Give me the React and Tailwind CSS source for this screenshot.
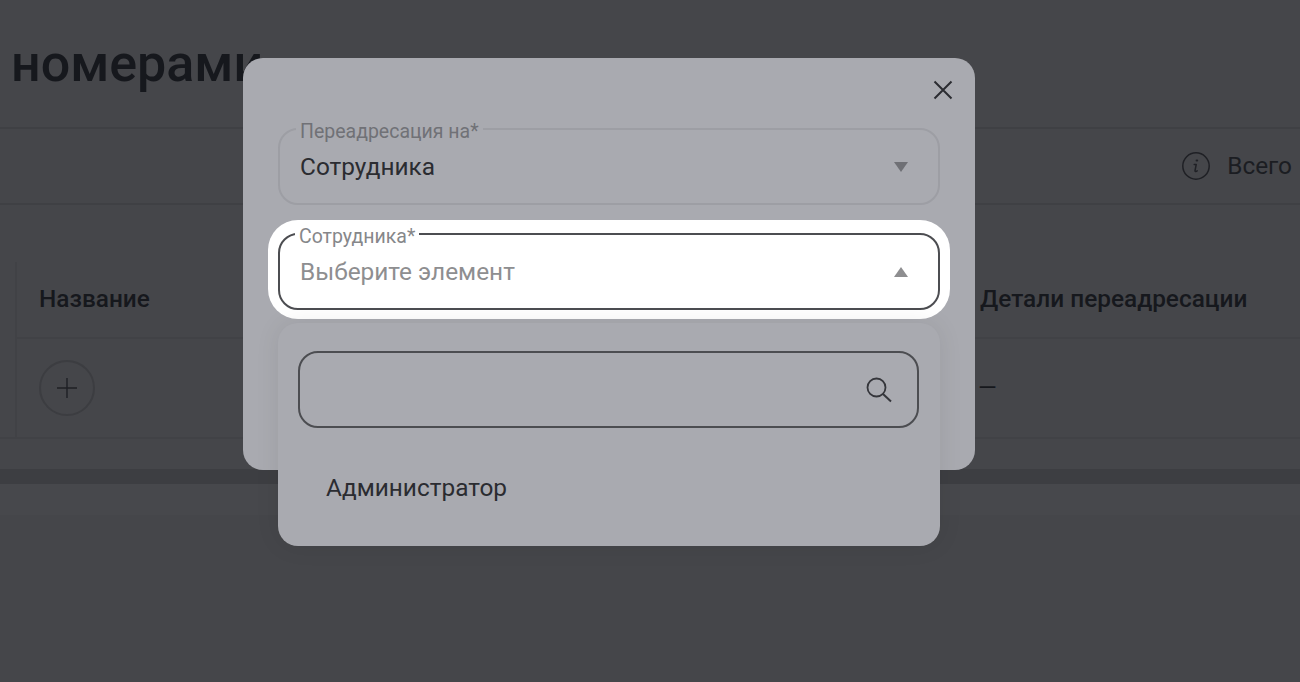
const font = { fontFamily: 'Roboto, "Noto Sans", sans-serif' };

function Caret({ up, className }) {
    return (
        <svg width="14" height="10" viewBox="0 0 14 10" className={className}>
            <path d={up ? 'M7 0L14 10H0Z' : 'M0 0H14L7 10Z'} fill="currentColor" />
        </svg>
    );
}

function Field({ label, value, up, active, bg }) {
    return (
        <div
            className={`relative flex h-[77px] items-center justify-between rounded-[20px] border-2 pl-[20px] pr-[30px] ${
                active ? 'border-[#4c4d51]' : 'border-[#9d9ea4]'
            }`}
        >
            <span
                className={`absolute top-[-7px] px-[4px] text-[19.5px] leading-[18px] ${bg} ${
                    active ? 'left-[15px] text-[#86878a]' : 'left-[16px] text-[#707176]'
                }`}
            >
                {label}
            </span>
            <span
                className={`pt-[1px] text-[24.4px] ${
                    active ? 'text-[#8e8e90]' : 'text-[#2b2c31]'
                }`}
            >
                {value}
            </span>
            <Caret up={up} className={active ? 'text-[#8e8e90]' : 'text-[#6f7075]'} />
        </div>
    );
}

export default function App() {
    return (
        <div
            className="relative h-[682px] w-full overflow-hidden bg-[#45464a]"
            style={font}
        >
            <div className="flex h-[129px] items-center border-b-2 border-[#3f4044] pl-[11px]">
                <h1 className="text-[52px] font-medium leading-none text-[#16181d]">номерами</h1>
            </div>

            <div className="flex h-[76px] items-center justify-end gap-[17px] border-b-2 border-[#3f4044] pr-[8px]">
                <svg width="28" height="28" viewBox="0 0 28 28" fill="none" stroke="#1f2025" strokeWidth="1.5">
                    <circle cx="14" cy="14" r="13.2" />
                    <path d="M14.6 8.4h.6" strokeWidth="2" strokeLinecap="round" />
                    <path d="M12.2 12.6h2l-1.2 6c-.1.8.5 1.1 1.2.8l1-.6" strokeLinecap="round" strokeLinejoin="round" />
                </svg>
                <span className="text-[24.4px] text-[#1b1d22]">Всего</span>
            </div>

            <div className="mt-[57px] grid grid-cols-[17px_941px_1fr] border-b-2 border-[#414246]">
                <div className="row-span-2 border-r-2 border-[#414246]" />
                <div className="flex h-[77px] items-center border-b-2 border-[#414246] pl-[22px] text-[24.4px] font-medium text-[#16181d]">
                    Название
                </div>
                <div className="flex h-[77px] items-center border-b-2 border-[#414246] pl-[22px] text-[24.4px] font-medium text-[#16181d]">
                    Детали переадресации
                </div>
                <div className="flex h-[98px] items-center pl-[22px]">
                    <div className="flex h-[56px] w-[56px] items-center justify-center rounded-full border-2 border-[#3c3d41]">
                        <svg width="20" height="20" viewBox="0 0 20 20" stroke="#1f2025" strokeWidth="1.4" className="mr-[1px]">
                            <path d="M10 0V20M0 10H20" />
                        </svg>
                    </div>
                </div>
                <div className="flex h-[98px] items-center pl-[20px] text-[24px] text-[#16181d]">
                    —
                </div>
            </div>

            <div className="mt-[30px] h-[15px] bg-[#3d3e42]" />
            <div className="h-[31px] bg-[#47484c]" />

            <div className="absolute left-[243px] top-[58px] h-[412px] w-[732px] rounded-[20px] bg-[#a9aab0] px-[35px] pt-[70px]">
                <button className="absolute right-[22px] top-[22px]">
                    <svg width="20" height="20" viewBox="0 0 20 20" stroke="#2b2c31" strokeWidth="2" className="block">
                        <path d="M1.5 1.5L18.5 18.5M18.5 1.5L1.5 18.5" />
                    </svg>
                </button>

                <Field label="Переадресация на*" value="Сотрудника" bg="bg-[#a9aab0]" />

                <div className="mx-[-10px] mt-[15px] rounded-[30px] bg-white px-[10px] pb-[9px] pt-[13px]">
                    <Field label="Сотрудника*" value="Выберите элемент" up active bg="bg-white" />
                </div>

                <div className="absolute left-[35px] top-[265px] h-[223px] w-[662px] rounded-[20px] bg-[#a9aab0] pl-[20px] pr-[21px] pt-[28px] shadow-[0_0_24px_rgba(0,0,0,0.08)]">
                    <div className="flex h-[77px] items-center justify-end rounded-[20px] border-2 border-[#4c4d51] pr-[25px]">
                        <svg width="26" height="26" viewBox="0 0 26 26" fill="none" stroke="#35363b" strokeWidth="1.8">
                            <circle cx="10.5" cy="10.5" r="9" />
                            <path d="M17 17L25 24.5" strokeWidth="2" />
                        </svg>
                    </div>
                    <div className="mt-[46px] pl-[28px] text-[24.4px] leading-[28px] text-[#2b2c31]">
                        Администратор
                    </div>
                </div>
            </div>
        </div>
    );
}
